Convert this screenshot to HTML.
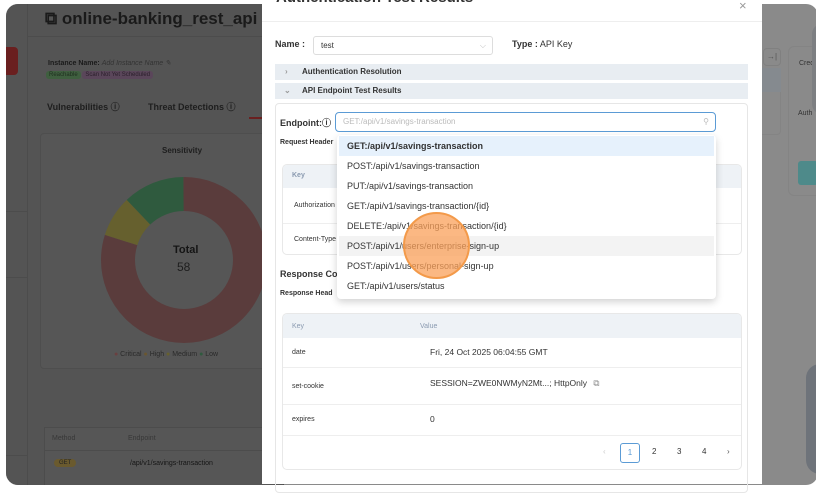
<!DOCTYPE html>
<html><head><meta charset="utf-8"><style>
*{box-sizing:border-box;margin:0;padding:0}
body{width:816px;height:490px;overflow:hidden;background:#fff;font-family:"Liberation Sans",Arial,sans-serif;position:relative}
.abs{position:absolute}
.page{left:6px;top:4px;width:812px;height:481px;background:#8a8a8a;border-radius:12px;overflow:hidden}
.left{left:0;top:0;width:256px;height:481px;background:#545454}
.t{position:absolute;white-space:nowrap}
.modal{left:262px;top:-12px;width:500px;height:496px;background:#fff}
.bar{position:absolute;left:13px;width:473px;height:16px;background:#e8edf2;font-size:8px;font-weight:bold;color:#333;line-height:16px;padding-left:27px}
.dd div{height:20px;line-height:20px;padding-left:8px;font-size:9px;color:#333}
.row{position:absolute;left:0;width:459px;border-top:1px solid #eee}
</style></head><body>
<div class="abs page">
 <div class="abs left">
 <div class="abs" style="left:0;top:43px;width:12px;height:28px;background:#6a1f1f;border-radius:0 4px 4px 0"></div>
 <div class="abs" style="left:21px;top:0;width:1px;height:481px;background:#4c4c4c"></div>
 <div class="abs" style="left:21px;top:32px;width:240px;height:1px;background:#4c4c4c"></div>
 <div class="abs" style="left:0;top:207px;width:21px;height:1px;background:#4c4c4c"></div>
 <div class="abs" style="left:0;top:273px;width:21px;height:1px;background:#4c4c4c"></div>
 <div class="abs" style="left:0;top:451px;width:21px;height:1px;background:#4c4c4c"></div>
 <div class="t" style="left:39px;top:5px;font-size:17px;font-weight:bold;color:#1a1a1a">⧉ online-banking_rest_api <span style="font-size:10px;color:#333">✎</span></div>
 <div class="t" style="left:42px;top:55px;font-size:7px;color:#1a1a1a"><b>Instance Name:</b> <i style="color:#333">Add Instance Name ✎</i></div>
 <div class="t" style="left:40px;top:68px;font-size:6px;color:#1f2f1f"><span style="background:#3f5f3f;padding:1px 3px;border-radius:3px">Reachable</span> <span style="background:#5a465a;padding:1px 3px;border-radius:3px;color:#2a1f2a">Scan Not Yet Scheduled</span></div>
 <div class="t" style="left:41px;top:96px;font-size:9px;font-weight:bold;color:#1e1e1e">Vulnerabilities ⓘ</div>
 <div class="t" style="left:142px;top:96px;font-size:9px;font-weight:bold;color:#1e1e1e">Threat Detections ⓘ</div>
 <div class="abs" style="left:243px;top:113px;width:20px;height:2px;background:#6a2020"></div>
 <div class="abs" style="left:34px;top:129px;width:240px;height:236px;background:#565656;border-radius:4px;border:1px solid #4e4e4e"></div>
 <div class="t" style="left:156px;top:142px;font-size:8px;font-weight:bold;color:#1e1e1e">Sensitivity</div>
 <svg class="abs" style="left:90px;top:168px" width="176" height="176" viewBox="-88 -88 176 176">
  <g fill="none" stroke-width="34">
   <circle r="66" stroke="#5a3c3c" pathLength="100" stroke-dasharray="80 20" transform="rotate(-90)"/>
   <circle r="66" stroke="#66602e" pathLength="100" stroke-dasharray="8 92" stroke-dashoffset="-80" transform="rotate(-90)"/>
   <circle r="66" stroke="#2f5a3e" pathLength="100" stroke-dasharray="12 88" stroke-dashoffset="-88" transform="rotate(-90)"/>
  </g>
 </svg>
 <div class="t" style="left:167px;top:240px;font-size:11px;font-weight:bold;color:#151515">Total</div>
 <div class="t" style="left:171px;top:256px;font-size:12px;color:#1e1e1e">58</div>
 <div class="t" style="left:108px;top:347px;font-size:7px;color:#2a2a2a"><span style="color:#6a4040">●</span> Critical <span style="color:#6a5630">●</span> High <span style="color:#66602e">●</span> Medium <span style="color:#2f5a3e">●</span> Low</div>
 <div class="abs" style="left:38px;top:423px;width:240px;height:60px;background:#565656;border:1px solid #4c4c4c"></div>
 <div class="abs" style="left:38px;top:446px;width:240px;height:1px;background:#4c4c4c"></div>
 <div class="t" style="left:46px;top:431px;font-size:7px;color:#383838">Method</div>
 <div class="t" style="left:122px;top:431px;font-size:7px;color:#383838">Endpoint</div>
 <div class="t" style="left:48px;top:455px;font-size:6px;color:#222;background:#6a5a2e;padding:1px 5px;border-radius:6px">GET</div>
 <div class="t" style="left:124px;top:456px;font-size:7px;color:#151515">/api/v1/savings-transaction</div>
 </div>
 <div class="abs" style="left:757px;top:44px;width:18px;height:18px;border:1px solid #808080;border-radius:4px;font-size:8px;color:#555;text-align:center;line-height:16px">→|</div>
 <div class="abs" style="left:738px;top:64px;width:37px;height:67px;border:1px solid #848484;border-radius:4px"></div>
 <div class="abs" style="left:738px;top:64px;width:37px;height:24px;background:#858a8f"></div>
 <div class="abs" style="left:782px;top:42px;width:40px;height:150px;border:1px solid #848484;border-radius:6px"></div>
 <div class="t" style="left:793px;top:56px;font-size:7px;color:#333">Cred</div>
 <div class="t" style="left:792px;top:106px;font-size:7px;color:#333">Auth</div>
 <div class="abs" style="left:792px;top:157px;width:20px;height:24px;background:#4e8a8a;border-radius:3px"></div>
 <div class="abs" style="left:800px;top:360px;width:30px;height:110px;background:#6e737a;border-radius:14px"></div>
 <div class="abs" style="left:806px;top:20px;width:20px;height:90px;background:#7d7f82;border-radius:10px"></div>
</div>
<div class="abs modal">
 <div class="t" style="left:14px;top:1px;font-size:15px;font-weight:bold;color:#333">Authentication Test Results</div>
 <div class="t" style="left:477px;top:10px;font-size:13px;color:#999">×</div>
 <div class="abs" style="left:0;top:33px;width:500px;height:1px;background:#eee"></div>
 <div class="t" style="left:13px;top:51px;font-size:9px;font-weight:bold;color:#333">Name :</div>
 <div class="abs" style="left:51px;top:48px;width:180px;height:19px;border:1px solid #ddd;border-radius:3px;font-size:8px;color:#333;line-height:17px;padding-left:7px">test<span style="position:absolute;right:6px;color:#bbb">⌵</span></div>
 <div class="t" style="left:250px;top:51px;font-size:9px;color:#333"><b>Type :</b> API Key</div>
 <div class="bar" style="top:76px"><span style="position:absolute;left:10px;color:#999">›</span>Authentication Resolution</div>
 <div class="bar" style="top:95px"><span style="position:absolute;left:9px;color:#999">⌄</span>API Endpoint Test Results</div>
 <div class="abs" style="left:13px;top:115px;width:473px;height:390px;border:1px solid #e6e6e6;border-radius:4px"></div>
 <div class="t" style="left:18px;top:128px;font-size:9px;font-weight:bold;color:#333">Endpoint:ⓘ</div>
 <div class="abs" style="left:73px;top:124px;width:381px;height:20px;border:1px solid #5b9bd5;border-radius:4px;font-size:8px;color:#bbb;line-height:18px;padding-left:7px">GET:/api/v1/savings-transaction<span style="position:absolute;right:6px">⚲</span></div>
 <div class="t" style="left:18px;top:151px;font-size:7px;font-weight:bold;color:#333">Request Header</div>
 <div class="abs" style="left:20px;top:176px;width:460px;height:91px;border:1px solid #e8e8e8;border-radius:5px;overflow:hidden">
  <div style="height:23px;background:#eef2f6"></div>
  <div class="row" style="top:58px"></div>
  <div class="t" style="left:9px;top:7px;font-size:7px;color:#8a9ab0;font-weight:bold">Key</div>
  <div class="t" style="left:11px;top:37px;font-size:7px;color:#333">Authorization</div>
  <div class="t" style="left:11px;top:71px;font-size:7px;color:#333">Content-Type</div>
 </div>
 <div class="t" style="left:18px;top:281px;font-size:9px;font-weight:bold;color:#333">Response Co</div>
 <div class="t" style="left:18px;top:302px;font-size:7px;font-weight:bold;color:#333">Response Head</div>
 <div class="abs" style="left:20px;top:325px;width:460px;height:157px;border:1px solid #e8e8e8;border-radius:5px;overflow:hidden">
  <div style="height:24px;background:#eef2f6"></div>
  <div class="row" style="top:53px"></div><div class="row" style="top:90px"></div><div class="row" style="top:121px"></div>
  <div class="t" style="left:9px;top:9px;font-size:7px;color:#8a9ab0">Key</div>
  <div class="t" style="left:137px;top:9px;font-size:7px;color:#8a9ab0">Value</div>
  <div class="t" style="left:9px;top:35px;font-size:7px;color:#333">date</div>
  <div class="t" style="left:147px;top:33px;font-size:8.5px;color:#333">Fri, 24 Oct 2025 06:04:55 GMT</div>
  <div class="t" style="left:9px;top:69px;font-size:7px;color:#333">set-cookie</div>
  <div class="t" style="left:147px;top:64px;font-size:8.5px;color:#333">SESSION=ZWE0NWMyN2Mt...; HttpOnly <span style="color:#888;margin-left:4px">⧉</span></div>
  <div class="t" style="left:9px;top:102px;font-size:7px;color:#333">expires</div>
  <div class="t" style="left:147px;top:100px;font-size:8.5px;color:#333">0</div>
  <div class="t" style="left:320px;top:133px;font-size:8px;color:#ccc">‹</div>
  <div class="abs" style="left:337px;top:129px;width:20px;height:20px;border:1px solid #5b9bd5;border-radius:3px;font-size:8px;color:#5b9bd5;text-align:center;line-height:18px">1</div>
  <div class="t" style="left:369px;top:133px;font-size:8px;color:#333">2</div>
  <div class="t" style="left:394px;top:133px;font-size:8px;color:#333">3</div>
  <div class="t" style="left:419px;top:133px;font-size:8px;color:#333">4</div>
  <div class="t" style="left:444px;top:133px;font-size:8px;color:#555">›</div>
 </div>
 <div class="abs dd" style="left:75px;top:147px;width:379px;height:164px;background:#fff;border-radius:4px;box-shadow:0 3px 8px rgba(0,0,0,.18);padding:1px 2px">
  <div style="background:#e6f1fc;font-weight:bold">GET:/api/v1/savings-transaction</div>
  <div>POST:/api/v1/savings-transaction</div>
  <div>PUT:/api/v1/savings-transaction</div>
  <div>GET:/api/v1/savings-transaction/{id}</div>
  <div>DELETE:/api/v1/savings-transaction/{id}</div>
  <div style="background:#f3f3f3">POST:/api/v1/users/enterprise-sign-up</div>
  <div>POST:/api/v1/users/personal-sign-up</div>
  <div>GET:/api/v1/users/status</div>
 </div>
 <div class="abs" style="left:141px;top:224px;width:67px;height:67px;border-radius:50%;background:rgba(250,160,90,.75);border:2px solid #f39a4a"></div>
</div>
</body></html>
